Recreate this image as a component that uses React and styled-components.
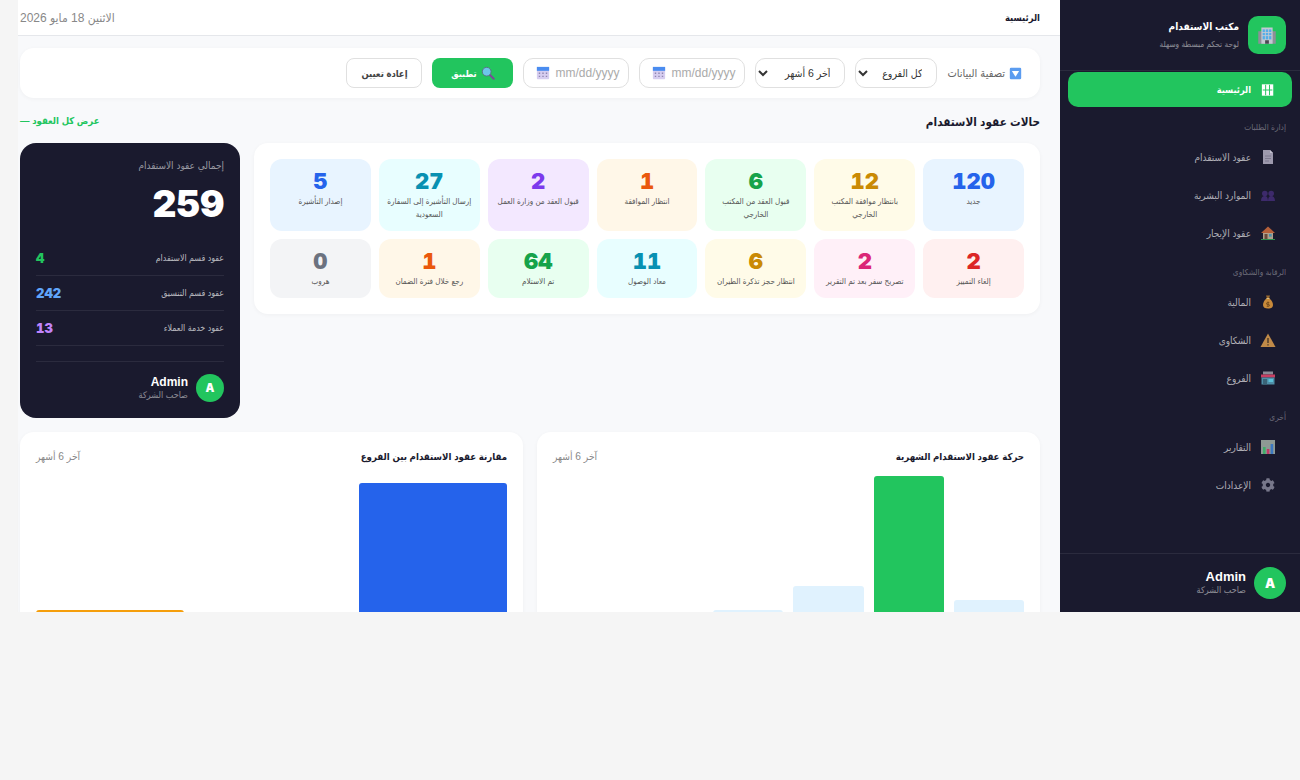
import React from 'react';
import styled, { createGlobalStyle } from 'styled-components';
import { FaCog } from 'react-icons/fa';

const GlobalStyle = createGlobalStyle`
    * { box-sizing: border-box; }
    html, body { margin: 0; padding: 0; background: #f5f5f5; }
    body { font-family: "Liberation Sans", "DejaVu Sans Condensed", sans-serif; }
    svg { flex-shrink: 0; }
`;

const Shell = styled.div`
    display: flex;
    direction: rtl;
    height: 612px;
    overflow: hidden;
`;

const Sidebar = styled.aside`
    width: 240px;
    flex-shrink: 0;
    display: flex;
    flex-direction: column;
    background: #1a1a2e;
    color: #fff;
`;

const Brand = styled.div`
    display: flex;
    align-items: center;
    gap: 9px;
    height: 71px;
    padding: 0 14px;
    border-bottom: 1px solid rgba(255, 255, 255, 0.08);
`;

const BrandLogo = styled.div`
    width: 38px;
    height: 38px;
    border-radius: 10px;
    background: #22c55e;
    display: flex;
    align-items: center;
    justify-content: center;
`;

const BrandTitle = styled.div`
    font-size: 10px;
    font-weight: 700;
    line-height: 16px;
`;

const BrandSub = styled.div`
    font-size: 8.2px;
    line-height: 13px;
    margin-top: 3px;
    color: rgba(255, 255, 255, 0.5);
`;

const Nav = styled.nav`
    flex: 1;
    display: flex;
    flex-direction: column;
    padding: 1px 8px 0;
`;

const NavSection = styled.div`
    font-size: 8.3px;
    line-height: 12px;
    color: rgba(255, 255, 255, 0.35);
    padding: 14px 6px 5px;
`;

const NavItem = styled.a`
    display: flex;
    align-items: center;
    gap: 8px;
    height: ${p => p.$active ? '35px' : '38px'};
    padding: 0 15px;
    border-radius: 10px;
    font-size: ${p => p.$active ? '9.2px' : '10px'};
    font-weight: ${p => p.$active ? 700 : 400};
    color: ${p => p.$active ? '#fff' : 'rgba(255, 255, 255, 0.65)'};
    background: ${p => p.$active ? '#22c55e' : 'transparent'};
`;

const NavIcon = styled.span`
    width: 18px;
    height: 16px;
    display: flex;
    align-items: center;
    justify-content: center;
    color: #77778a;
`;

const SideFoot = styled.div`
    display: flex;
    align-items: center;
    gap: 8px;
    height: 59px;
    padding: 0 14px;
    border-top: 1px solid rgba(255, 255, 255, 0.08);
`;

const Avatar = styled.div`
    width: ${p => p.$size}px;
    height: ${p => p.$size}px;
    border-radius: 50%;
    background: #22c55e;
    color: #fff;
    font-family: Inter, sans-serif;
    font-weight: 900;
    font-size: ${p => p.$size / 2.5}px;
    display: flex;
    align-items: center;
    justify-content: center;
`;

const UserName = styled.div`
    font-size: ${p => p.$size}px;
    font-weight: 700;
    line-height: 14px;
    color: #fff;
`;

const UserRole = styled.div`
    font-size: 9px;
    line-height: 12px;
    color: rgba(255, 255, 255, 0.5);
`;

const Main = styled.main`
    flex: 1;
    min-width: 0;
    margin-left: 18px;
    background: #f8f9fb;
`;

const TopBar = styled.header`
    display: flex;
    align-items: center;
    justify-content: space-between;
    height: 36px;
    padding: 0 20px 0 2px;
    background: #fff;
    border-bottom: 1px solid #e5e7eb;
`;

const TopTitle = styled.div`
    font-size: 9.4px;
    font-weight: 700;
    color: #1a1a2e;
`;

const TopDate = styled.div`
    font-size: 12px;
    color: #888;
`;

const Content = styled.div`
    padding: 12px 20px 0 2px;
`;

const FilterBar = styled.div`
    display: flex;
    align-items: center;
    gap: 10px;
    height: 50px;
    padding: 0 18px;
    background: #fff;
    border-radius: 14px;
    box-shadow: 0 1px 4px rgba(0, 0, 0, 0.04);
`;

const FilterLabel = styled.div`
    font-size: 11px;
    color: #666;
    display: flex;
    align-items: center;
    gap: 4px;
`;

const Select = styled.select`
    height: 30px;
    width: ${p => p.$w}px;
    padding: 0 10px 0 0;
    border: 1px solid #e0e0e0;
    border-radius: 10px;
    background: #fff;
    font-family: inherit;
    font-size: 10.5px;
    color: #333;
`;

const DateField = styled.div`
    display: flex;
    align-items: center;
    gap: 5px;
    direction: ltr;
    width: 106px;
    height: 30px;
    padding: 0 12px;
    border: 1px solid #e0e0e0;
    border-radius: 10px;
    background: #fff;
    font-size: 12px;
    color: #aaa;
`;

const ApplyButton = styled.button`
    display: flex;
    align-items: center;
    justify-content: center;
    gap: 4px;
    height: 30px;
    width: 81px;
    border: none;
    border-radius: 8px;
    background: #22c55e;
    color: #fff;
    font-family: inherit;
    font-size: 9.2px;
    font-weight: 700;
`;

const ResetButton = styled.button`
    height: 30px;
    width: 76px;
    border: 1px solid #e0e0e0;
    border-radius: 8px;
    background: #fff;
    color: #444;
    font-family: inherit;
    font-size: 9.4px;
    font-weight: 700;
`;

const SectionHead = styled.div`
    display: flex;
    align-items: center;
    justify-content: space-between;
    margin-top: 14px;
    height: 20px;
`;

const SectionTitle = styled.h2`
    margin: 0;
    font-size: 11.7px;
    font-weight: 700;
    color: #1a1a2e;
`;

const SectionLink = styled.a`
    font-size: 9.500px;
    font-weight: 700;
    color: #22c55e;
    padding-bottom: 4px;
`;

const Overview = styled.div`
    display: flex;
    align-items: flex-start;
    gap: 14px;
    margin-top: 11px;
`;

const StatusCard = styled.div`
    flex: 1;
    display: grid;
    grid-template-columns: repeat(7, 1fr);
    gap: 8px;
    padding: 16px;
    background: #fff;
    border-radius: 14px;
    box-shadow: 0 1px 4px rgba(0, 0, 0, 0.04);
`;

const Tile = styled.div`
    padding: 9px 8px 10px;
    border-radius: 12px;
    background: ${p => p.$bg};
    text-align: center;
`;

const TileNumber = styled.div`
    font-family: Inter, sans-serif;
    font-variant-numeric: tabular-nums;
    font-size: 22px;
    font-weight: 900;
    line-height: 26px;
    color: ${p => p.$color};
`;

const TileLabel = styled.div`
    font-size: 8px;
    line-height: 13px;
    color: #555;
    margin-top: 1px;
`;

const TotalPanel = styled.div`
    width: 220px;
    height: 275px;
    flex-shrink: 0;
    padding: 16px;
    border-radius: 16px;
    background: #1a1a2e;
    color: #fff;
`;

const TotalLabel = styled.div`
    font-size: 10px;
    line-height: 13px;
    color: rgba(255, 255, 255, 0.55);
`;

const TotalValue = styled.div`
    font-family: Inter, sans-serif;
    font-variant-numeric: tabular-nums;
    font-size: 37px;
    font-weight: 900;
    line-height: 44px;
    margin: 10px 0 15px;
`;

const TotalRow = styled.div`
    display: flex;
    align-items: center;
    justify-content: space-between;
    height: 35px;
    border-bottom: 1px solid rgba(255, 255, 255, 0.08);
    font-size: 8.8px;
    color: rgba(255, 255, 255, 0.7);
`;

const TotalAmount = styled.b`
    font-family: Inter, sans-serif;
    font-variant-numeric: tabular-nums;
    font-size: 13px;
    font-weight: 900;
    color: ${p => p.$color};
`;

const PanelUser = styled.div`
    display: flex;
    align-items: center;
    gap: 8px;
    margin-top: 15px;
    padding-top: 12px;
    border-top: 1px solid rgba(255, 255, 255, 0.08);
`;

const Charts = styled.div`
    display: grid;
    grid-template-columns: 1fr 1fr;
    gap: 14px;
    margin-top: 14px;
`;

const ChartCard = styled.section`
    height: 250px;
    padding: 16px;
    background: #fff;
    border-radius: 14px;
    box-shadow: 0 1px 4px rgba(0, 0, 0, 0.04);
`;

const ChartHead = styled.div`
    display: flex;
    align-items: center;
    justify-content: space-between;
    height: 16px;
`;

const ChartTitle = styled.h3`
    margin: 0;
    font-size: 9.6px;
    font-weight: 700;
    color: #1a1a2e;
`;

const ChartRange = styled.span`
    font-size: 10.2px;
    color: #888;
`;

const Bars = styled.div`
    display: flex;
    align-items: flex-end;
    gap: ${p => p.$gap}px;
    height: 200px;
    margin-top: 6px;
`;

const Bar = styled.div`
    flex: 1;
    height: ${p => p.$h}px;
    border-radius: 3px 3px 0 0;
    background: ${p => p.$color};
`;

const Svg = ({ size = 16, children }) => (
    <svg width={size} height={size} viewBox="0 0 16 16">{children}</svg>
);

const BuildingIcon = () => (
    <Svg size={20}>
        <rect x="1" y="5" width="14" height="10" fill="#8d8f98" />
        <rect x="3.5" y="2" width="9" height="13" fill="#c4c9d2" />
        <path d="M4.5 3.5h7v8h-7z" fill="#54aee8" />
        <path d="M6.7 3v9M9.3 3v9M4 6h8M4 8.5h8" stroke="#c4c9d2" strokeWidth=".7" />
        <rect x="6.5" y="12.2" width="3" height="2.8" fill="#4a4a52" />
    </Svg>
);

const GridIcon = () => (
    <Svg size={14}>
        <rect x="1" y="1.500" width="13" height="13" fill="#fff" />
        <path d="M5.300 2v12M9.700 2v12M2 8h11" stroke="#22c55e" strokeWidth="1.100" />
    </Svg>
);

const DocIcon = () => (
    <Svg>
        <path d="M3 1h7l3 3v11H3z" fill="#9d99ad" />
        <path d="M10 1v3h3z" fill="#c3c0cf" />
        <path d="M5 7h6M5 9.500h6M5 12h4" stroke="#7d798f" strokeWidth="1" />
    </Svg>
);

const PeopleIcon = () => (
    <Svg>
        <g fill="#3d2a6b">
            <circle cx="4.800" cy="6.500" r="2.800" />
            <circle cx="11.200" cy="6.500" r="2.800" />
            <path d="M1 14c0-3.500 1.500-5 3.800-5s3 1.500 3.200 5zM8 14c.2-3.500 1-5 3.200-5s3.800 1.500 3.800 5z" />
        </g>
    </Svg>
);

const HouseIcon = () => (
    <Svg>
        <rect x="3" y="7" width="10" height="7" fill="#b0a08c" />
        <path d="M8 1.500L15 8H1z" fill="#b5603a" />
        <rect x="4.500" y="9" width="3" height="5" fill="#6a4a3a" />
        <rect x="9" y="9" width="2.700" height="2.700" fill="#4f90a8" />
        <rect x="1" y="14" width="14" height="1" fill="#2f8f4f" />
    </Svg>
);

const MoneyIcon = () => (
    <Svg>
        <path d="M6 1.500h4L9.200 4h-2.400z" fill="#9a6a30" />
        <path d="M6.500 4.500h3C12 6.500 13 9 13 11c0 2.500-2 3.500-5 3.500S3 13.500 3 11c0-2 1-4.500 3.500-6.500z" fill="#c98a3a" />
        <rect x="6.500" y="4" width="3" height="1" fill="#e0c080" />
        <path d="M8 7.500v5M9.300 8.700H7.400a.9.9 0 000 1.800h1.200a.9.900 0 010 1.800H6.700" stroke="#6a4318" strokeWidth=".8" fill="none" />
    </Svg>
);

const WarnIcon = () => (
    <Svg>
        <path d="M8 1.500L15.500 15H.5z" fill="#c08a48" />
        <path d="M8 6v5M8 12.200v1.300" stroke="#3e3024" strokeWidth="1.300" />
    </Svg>
);

const StoreIcon = () => (
    <Svg>
        <rect x="3" y="1.500" width="10" height="3" fill="#8a8a96" />
        <rect x="1" y="4.500" width="14" height="3" fill="#c83f62" />
        <rect x="1.500" y="7.500" width="13" height="7" fill="#4f8fa8" />
        <rect x="3" y="9" width="4" height="5.500" fill="#3a6478" />
        <rect x="8.500" y="9" width="4.500" height="3" fill="#5cc0d8" />
    </Svg>
);

const ChartIcon = () => (
    <Svg>
        <rect x="1" y="1" width="14" height="14" fill="#8e9a94" />
        <rect x="3" y="8" width="2.600" height="7" fill="#3fae6a" />
        <rect x="6.800" y="10" width="2.600" height="5" fill="#c23a68" />
        <rect x="10.600" y="5" width="2.600" height="10" fill="#3c78c0" />
    </Svg>
);

const FilterIcon = () => (
    <Svg size={13}>
        <rect x="1" y="1" width="14" height="14" rx="1.500" fill="#5b9cf0" />
        <path d="M3.500 5h9L8 12z" fill="#fff" />
    </Svg>
);

const SearchIcon = () => (
    <Svg size={14}>
        <path d="M10 10l4.500 4.500" stroke="#7a4a96" strokeWidth="2.400" strokeLinecap="round" />
        <circle cx="6.500" cy="6.500" r="5" fill="#6cc6ea" stroke="#5a6a80" strokeWidth="1" />
    </Svg>
);

const CalendarIcon = () => (
    <Svg size={14}>
        <rect x="1" y="1" width="14" height="14" rx="1" fill="#d6cdf0" />
        <rect x="1" y="1" width="14" height="4.500" fill="#4a8cf0" />
        <path d="M4 7.500v1.700M8 7.500v1.700M12 7.500v1.700M4 11v1.700M8 11v1.700M12 11v1.700" stroke="#8f86b0" strokeWidth="1.600" />
    </Svg>
);

const tiles = [
    ['120', 'جديد', '#e8f4ff', '#2563eb'],
    ['12', 'بانتظار موافقة المكتب الخارجي', '#fffbe8', '#ca8a04'],
    ['6', 'قبول العقد من المكتب الخارجي', '#e8fff0', '#16a34a'],
    ['1', 'انتظار الموافقة', '#fff7e8', '#ea580c'],
    ['2', 'قبول العقد من وزارة العمل', '#f3e8ff', '#7c3aed'],
    ['27', 'إرسال التأشيرة إلى السفارة السعودية', '#e8feff', '#0891b2'],
    ['5', 'إصدار التأشيرة', '#e8f4ff', '#2563eb'],
    ['2', 'إلغاء التمييز', '#fff0f0', '#dc2626'],
    ['2', 'تصريح سفر بعد تم التقرير', '#fff0f8', '#db2777'],
    ['6', 'انتظار حجز تذكرة الطيران', '#fffbe8', '#ca8a04'],
    ['11', 'معاد الوصول', '#e8feff', '#0891b2'],
    ['64', 'تم الاستلام', '#e8fff0', '#16a34a'],
    ['1', 'رجع خلال فترة الضمان', '#fff7e8', '#ea580c'],
    ['0', 'هروب', '#f3f4f6', '#6b7280'],
];

const navGroups = [
    ['إدارة الطلبات', [[<DocIcon />, 'عقود الاستقدام'], [<PeopleIcon />, 'الموارد البشرية'], [<HouseIcon />, 'عقود الإيجار']]],
    ['الرقابة والشكاوى', [[<MoneyIcon />, 'المالية'], [<WarnIcon />, 'الشكاوى'], [<StoreIcon />, 'الفروع']]],
    ['أخرى', [[<ChartIcon />, 'التقارير'], [<FaCog size={14} />, 'الإعدادات']]],
];

const monthly = [
    [70, '#e0f2fe'], [194, '#22c55e'], [84, '#e0f2fe'], [60, '#e0f2fe'], [0, '#e0f2fe'], [0, '#e0f2fe'],
];

const branches = [
    [187, '#2563eb'], [0, '#22c55e'], [60, '#f59e0b'],
];

const App = () => (
    <>
        <GlobalStyle />
        <Shell>
            <Sidebar>
                <Brand>
                    <BrandLogo><BuildingIcon /></BrandLogo>
                    <div>
                        <BrandTitle>مكتب الاستقدام</BrandTitle>
                        <BrandSub>لوحة تحكم مبسطة وسهلة</BrandSub>
                    </div>
                </Brand>
                <Nav>
                    <NavItem $active>
                        <NavIcon><GridIcon /></NavIcon>
                        الرئيسية
                    </NavItem>
                    {navGroups.map(([title, items]) => (
                        <React.Fragment key={title}>
                            <NavSection>{title}</NavSection>
                            {items.map(([icon, label]) => (
                                <NavItem key={label}>
                                    <NavIcon>{icon}</NavIcon>
                                    {label}
                                </NavItem>
                            ))}
                        </React.Fragment>
                    ))}
                </Nav>
                <SideFoot>
                    <Avatar $size={32}>A</Avatar>
                    <div>
                        <UserName $size={13}>Admin</UserName>
                        <UserRole>صاحب الشركة</UserRole>
                    </div>
                </SideFoot>
            </Sidebar>
            <Main>
                <TopBar>
                    <TopTitle>الرئيسية</TopTitle>
                    <TopDate>الاثنين 18 مايو 2026</TopDate>
                </TopBar>
                <Content>
                    <FilterBar>
                        <FilterLabel><FilterIcon />تصفية البيانات</FilterLabel>
                        <Select $w={82}><option>كل الفروع</option></Select>
                        <Select $w={90}><option>آخر 6 أشهر</option></Select>
                        <DateField><CalendarIcon />mm/dd/yyyy</DateField>
                        <DateField><CalendarIcon />mm/dd/yyyy</DateField>
                        <ApplyButton><SearchIcon />تطبيق</ApplyButton>
                        <ResetButton>إعادة تعيين</ResetButton>
                    </FilterBar>
                    <SectionHead>
                        <SectionTitle>حالات عقود الاستقدام</SectionTitle>
                        <SectionLink>عرض كل العقود —</SectionLink>
                    </SectionHead>
                    <Overview>
                        <StatusCard>
                            {tiles.map(([num, label, bg, color], i) => (
                                <Tile key={i} $bg={bg}>
                                    <TileNumber $color={color}>{num}</TileNumber>
                                    <TileLabel>{label}</TileLabel>
                                </Tile>
                            ))}
                        </StatusCard>
                        <TotalPanel>
                            <TotalLabel>إجمالي عقود الاستقدام</TotalLabel>
                            <TotalValue>259</TotalValue>
                            <TotalRow>عقود قسم الاستقدام<TotalAmount $color="#22c55e">4</TotalAmount></TotalRow>
                            <TotalRow>عقود قسم التنسيق<TotalAmount $color="#60a5fa">242</TotalAmount></TotalRow>
                            <TotalRow>عقود خدمة العملاء<TotalAmount $color="#c084fc">13</TotalAmount></TotalRow>
                            <PanelUser>
                                <Avatar $size={28}>A</Avatar>
                                <div>
                                    <UserName $size={12}>Admin</UserName>
                                    <UserRole>صاحب الشركة</UserRole>
                                </div>
                            </PanelUser>
                        </TotalPanel>
                    </Overview>
                    <Charts>
                        <ChartCard>
                            <ChartHead>
                                <ChartTitle>حركة عقود الاستقدام الشهرية</ChartTitle>
                                <ChartRange>آخر 6 أشهر</ChartRange>
                            </ChartHead>
                            <Bars $gap={10}>
                                {monthly.map(([h, c], i) => <Bar key={i} $h={h} $color={c} />)}
                            </Bars>
                        </ChartCard>
                        <ChartCard>
                            <ChartHead>
                                <ChartTitle>مقارنة عقود الاستقدام بين الفروع</ChartTitle>
                                <ChartRange>آخر 6 أشهر</ChartRange>
                            </ChartHead>
                            <Bars $gap={14}>
                                {branches.map(([h, c], i) => <Bar key={i} $h={h} $color={c} />)}
                            </Bars>
                        </ChartCard>
                    </Charts>
                </Content>
            </Main>
        </Shell>
    </>
);

export default App;
